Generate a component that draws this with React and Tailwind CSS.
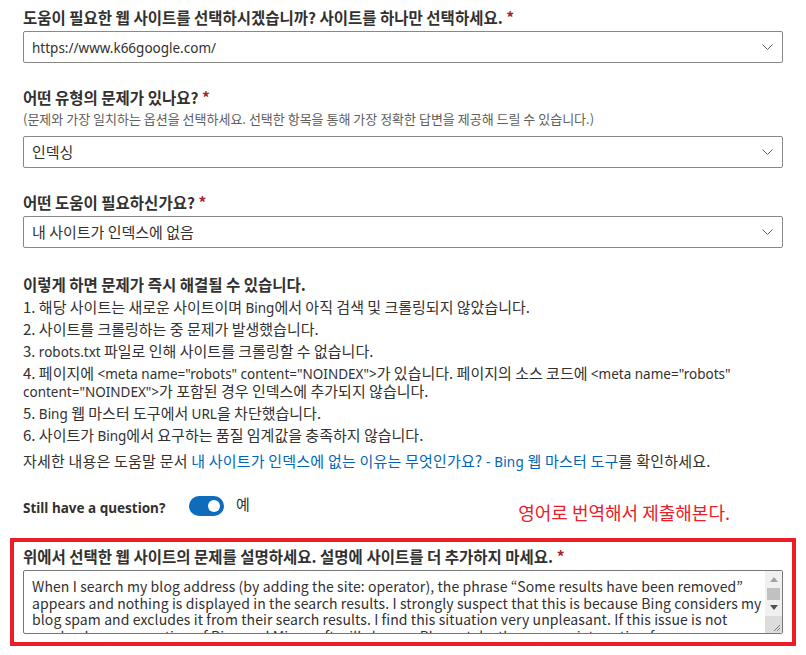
import React from "react";

function L({ children }) {
  return <span className="font-['Noto_Sans',sans-serif] text-[13.5px] leading-[0]">{children}</span>;
}

function Chevron() {
  return (
    <svg width="11" height="6" viewBox="0 0 11 6" className="shrink-0">
      <path d="M0.5 0.5 L5.5 5.5 L10.5 0.5" fill="none" stroke="#605e5c" strokeWidth="1" />
    </svg>
  );
}

function Select({ children }) {
  return (
    <div className="flex h-[32px] items-center justify-between rounded-[2px] border border-[#8a8886] bg-white pl-[8px] pr-[9px] text-[15px] leading-[20px] text-[#323130]">
      <span>{children}</span>
      <Chevron />
    </div>
  );
}

function Req() {
  return <span className="text-[#a4262c]"> *</span>;
}

export default function App() {
  const lines = [
    "When I search my blog address (by adding the site: operator), the phrase \u201cSome results have been removed\u201d",
    "appears and nothing is displayed in the search results. I strongly suspect that this is because Bing considers my",
    "blog spam and excludes it from their search results. I find this situation very unpleasant. If this issue is not",
    "resolved, my perception of Bing and Microsoft will change. Please take the appropriate action for me.",
  ];
  return (
    <div className="min-h-[655px] w-[806px] bg-white px-[10px] pt-[7px] font-['Noto_Sans_CJK_KR',sans-serif] text-[#323130]">
      <div className="px-[13px]">
        <div className="text-[15.5px] font-bold leading-[20px]">
          도움이 필요한 웹 사이트를 선택하시겠습니까? 사이트를 하나만 선택하세요.<Req />
        </div>
        <div className="mt-[4px]">
          <Select><L>https://www.k66google.com/</L></Select>
        </div>

        <div className="mt-[24px] text-[15.5px] font-bold leading-[20px]">
          어떤 유형의 문제가 있나요?<Req />
        </div>
        <div className="mt-[4px] text-[13px] leading-[16px] text-[#605e5c]">
          (문제와 가장 일치하는 옵션을 선택하세요. 선택한 항목을 통해 가장 정확한 답변을 제공해 드릴 수 있습니다.)
        </div>
        <div className="mt-[9px]">
          <Select>인덱싱</Select>
        </div>

        <div className="mt-[24px] text-[15.5px] font-bold leading-[20px]">
          어떤 도움이 필요하신가요?<Req />
        </div>
        <div className="mt-[4px]">
          <Select>내 사이트가 인덱스에 없음</Select>
        </div>

        <div className="mt-[26px] text-[15.5px] font-bold leading-[20px]">
          이렇게 하면 문제가 즉시 해결될 수 있습니다.
        </div>
        <div className="mt-[4px] flex flex-col gap-[4px] text-[15px] leading-[18px]">
          <div>1. 해당 사이트는 새로운 사이트이며 <L>Bing</L>에서 아직 검색 및 크롤링되지 않았습니다.</div>
          <div>2. 사이트를 크롤링하는 중 문제가 발생했습니다.</div>
          <div>3. <L>robots.txt</L> 파일로 인해 사이트를 크롤링할 수 없습니다.</div>
          <div className="whitespace-nowrap">
            4. 페이지에 <L>&lt;meta name="robots" content="NOINDEX"&gt;</L>가 있습니다. 페이지의 소스 코드에 <L>&lt;meta name="robots"</L>
            <br />
            <L>content="NOINDEX"&gt;</L>가 포함된 경우 인덱스에 추가되지 않습니다.
          </div>
          <div>5. <L>Bing</L> 웹 마스터 도구에서 <L>URL</L>을 차단했습니다.</div>
          <div>6. 사이트가 <L>Bing</L>에서 요구하는 품질 임계값을 충족하지 않습니다.</div>
          <div className="mt-[4px] whitespace-nowrap tracking-[0.2px]">
            자세한 내용은 도움말 문서{" "}
            <span className="text-[#0067b8]">내 사이트가 인덱스에 없는 이유는 무엇인가요? <L>- Bing</L> 웹 마스터 도구</span>
            를 확인하세요.
          </div>
        </div>

        <div className="mt-[26px] flex items-start">
          <div className="flex items-center">
            <span className="w-[166px] font-bold leading-[20px]"><L>Still have a question?</L></span>
            <div className="flex h-[20px] w-[35px] items-center justify-end rounded-full bg-[#0f6cbd] pr-[4px]">
              <div className="h-[12px] w-[12px] rounded-full bg-white" />
            </div>
            <span className="ml-[12px] -mt-[4px] text-[15px] leading-[20px]">예</span>
          </div>
          <div className="ml-auto mr-[53px] mt-[6px] text-[18px] leading-[20px] text-[#e8202a]">
            영어로 번역해서 제출해본다.
          </div>
        </div>
      </div>

      <div className="mt-[16px] border-[4px] border-[#ee1c25] px-[9px] pb-[8px] pt-[4px]">
        <div className="text-[15.5px] font-bold leading-[20px]">
          위에서 선택한 웹 사이트의 문제를 설명하세요. 설명에 사이트를 더 추가하지 마세요.<Req />
        </div>
        <div className="mt-[4px] flex h-[64px] overflow-hidden rounded-[2px] border border-[#767676] bg-white">
          <div className="flex-1 overflow-hidden pl-[8px] pt-[7px] text-[14px] leading-[16.67px] tracking-[0.1px] text-[#323130]">
            {lines.map((l, i) => (
              <div key={i} className="whitespace-nowrap">{l}</div>
            ))}
          </div>
          <div className="flex w-[17px] flex-col bg-[#f0f0f0]">
            <div className="flex h-[17px] items-center justify-center">
              <svg width="8" height="5" viewBox="0 0 8 5"><path d="M0 5 L4 0 L8 5 Z" fill="#a3a3a3" /></svg>
            </div>
            <div className="mx-[2px] h-[12px] bg-[#c1c1c1]" />
            <div className="flex h-[17px] items-center justify-center">
              <svg width="8" height="5" viewBox="0 0 8 5"><path d="M0 0 L4 5 L8 0 Z" fill="#505050" /></svg>
            </div>
            <div className="relative mt-auto h-[17px] bg-[#dcdcdc]">
              <svg width="17" height="17" viewBox="0 0 17 17" className="absolute inset-0">
                <path d="M15 9 L9 15 M15 12 L12 15" stroke="#7a7a7a" strokeWidth="1" fill="none" />
              </svg>
            </div>
          </div>
        </div>
      </div>
    </div>
  );
}
